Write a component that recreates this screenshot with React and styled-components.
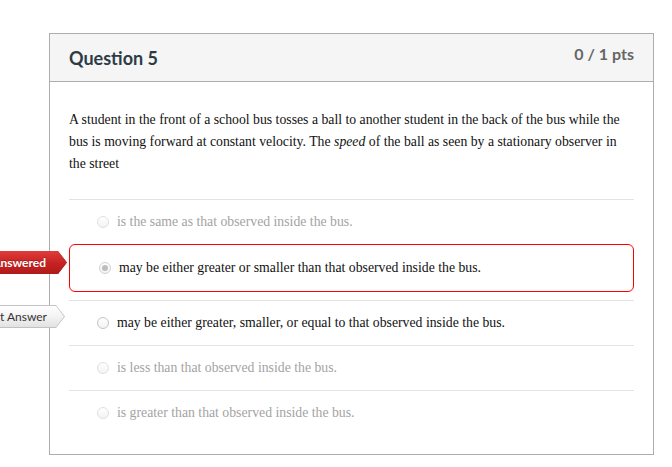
import React from "react";
import styled, { createGlobalStyle, css } from "styled-components";

const GlobalStyle = createGlobalStyle`
  html, body {
    margin: 0;
    padding: 0;
    background: #fff;
    overflow: hidden;
  }
`;

const Page = styled.div`
  padding: 33px 0 0 49px;
`;

const Card = styled.div`
  width: 605px;
  box-sizing: border-box;
  border: 1px solid #adadad;
  background: #fff;
`;

const Header = styled.div`
  height: 47px;
  display: flex;
  justify-content: space-between;
  align-items: center;
  padding: 0 19px;
  background: #f5f5f5;
  border-bottom: 1px solid #adadad;
  font-family: Lato, "Liberation Sans", sans-serif;
`;

const Title = styled.h2`
  margin: 0;
  font-size: 18px;
  font-weight: 700;
  color: #2d3b45;
`;

const Points = styled.span`
  align-self: flex-start;
  margin-top: 10px;
  font-size: 16px;
  font-weight: 700;
  color: #666;
`;

const Body = styled.div`
  padding: 27px 19px 19px;
`;

const QuestionText = styled.p`
  margin: 0 0 24px;
  font-family: "Liberation Serif", "Times New Roman", serif;
  font-size: 13.75px;
  line-height: 22px;
  color: #111;
  em {
    font-style: italic;
  }
`;

const AnswerRow = styled.div`
  position: relative;
  display: flex;
  align-items: center;
  gap: 8px;
  box-sizing: border-box;
  height: 45px;
  padding-left: 28px;
  border-top: 1px solid #e3e3e3;
  font-family: "Liberation Serif", "Times New Roman", serif;
  font-size: 13.75px;
  color: ${(props) => (props.muted ? "#a3a3a3" : "#111")};
  ${(props) =>
    props.wrong &&
    css`
      height: 48px;
      margin-bottom: 8px;
      padding-left: 29px;
      border: 1px solid #f00;
      border-radius: 6px;
    `}
`;

const Radio = styled.span`
  position: relative;
  width: 12px;
  height: 12px;
  box-sizing: border-box;
  border-radius: 50%;
  flex-shrink: 0;
  border: 1px solid ${(props) => (props.muted ? "#e0e0e0" : "#c4c4c4")};
  background: linear-gradient(#fff, #f3f3f3);
  ${(props) =>
    props.checked &&
    css`
      border-color: #d0d0d0;
      &::after {
        content: "";
        position: absolute;
        left: 2px;
        top: 2px;
        width: 6px;
        height: 6px;
        border-radius: 50%;
        background: #bdbdbd;
      }
    `}
`;

const Tag = styled.div`
  position: absolute;
  right: calc(100% + ${(props) => props.gap}px);
  top: ${(props) => props.top}px;
  height: 23px;
  padding: ${(props) => (props.red ? "0" : "1px")};
  box-sizing: border-box;
  background: ${(props) => (props.red ? "#b31c1c" : "#c2c2c2")};
  clip-path: polygon(0 0, calc(100% - 9px) 0, 100% 50%, calc(100% - 9px) 100%, 0 100%);
`;

const TagFace = styled.div`
  height: 100%;
  display: flex;
  align-items: center;
  padding-right: ${(props) => props.pad}px;
  white-space: nowrap;
  font-family: Lato, "Liberation Sans", sans-serif;
  font-size: 12px;
  font-weight: ${(props) => (props.red ? 700 : 400)};
  color: ${(props) => (props.red ? "#fff" : "#333")};
  background: ${(props) =>
    props.red
      ? "linear-gradient(#e23b3b, #c42222 55%, #b01a1a)"
      : "linear-gradient(#ffffff, #f2f2f2 55%, #e2e2e2)"};
  text-shadow: ${(props) => (props.red ? "0 -1px 0 rgba(0,0,0,0.25)" : "none")};
  clip-path: polygon(0 0, calc(100% - 8px) 0, 100% 50%, calc(100% - 8px) 100%, 0 100%);
`;

const answers = [
  { text: "is the same as that observed inside the bus.", muted: true },
  {
    text: "may be either greater or smaller than that observed inside the bus.",
    wrong: true,
    checked: true,
  },
  {
    text: "may be either greater, smaller, or equal to that observed inside the bus.",
    correct: true,
  },
  { text: "is less than that observed inside the bus.", muted: true },
  { text: "is greater than that observed inside the bus.", muted: true },
];

const App = () => {
  return (
    <Page>
      <GlobalStyle />
      <Card>
        <Header>
          <Title>Question 5</Title>
          <Points>0 / 1 pts</Points>
        </Header>
        <Body>
          <QuestionText>
            A student in the front of a school bus tosses a ball to another
            student in the back of the bus while the bus is moving forward at
            constant velocity. The <em>speed</em> of the ball as seen by a
            stationary observer in the street
          </QuestionText>
          {answers.map((a) => (
            <AnswerRow key={a.text} muted={a.muted} wrong={a.wrong}>
              {a.wrong && (
                <Tag red gap={3} top={6}>
                  <TagFace red pad={21}>You Answered</TagFace>
                </Tag>
              )}
              {a.correct && (
                <Tag gap={4} top={4}>
                  <TagFace pad={17}>Correct Answer</TagFace>
                </Tag>
              )}
              <Radio muted={a.muted} checked={a.checked} />
              <span>{a.text}</span>
            </AnswerRow>
          ))}
        </Body>
      </Card>
    </Page>
  );
};

export default App;
